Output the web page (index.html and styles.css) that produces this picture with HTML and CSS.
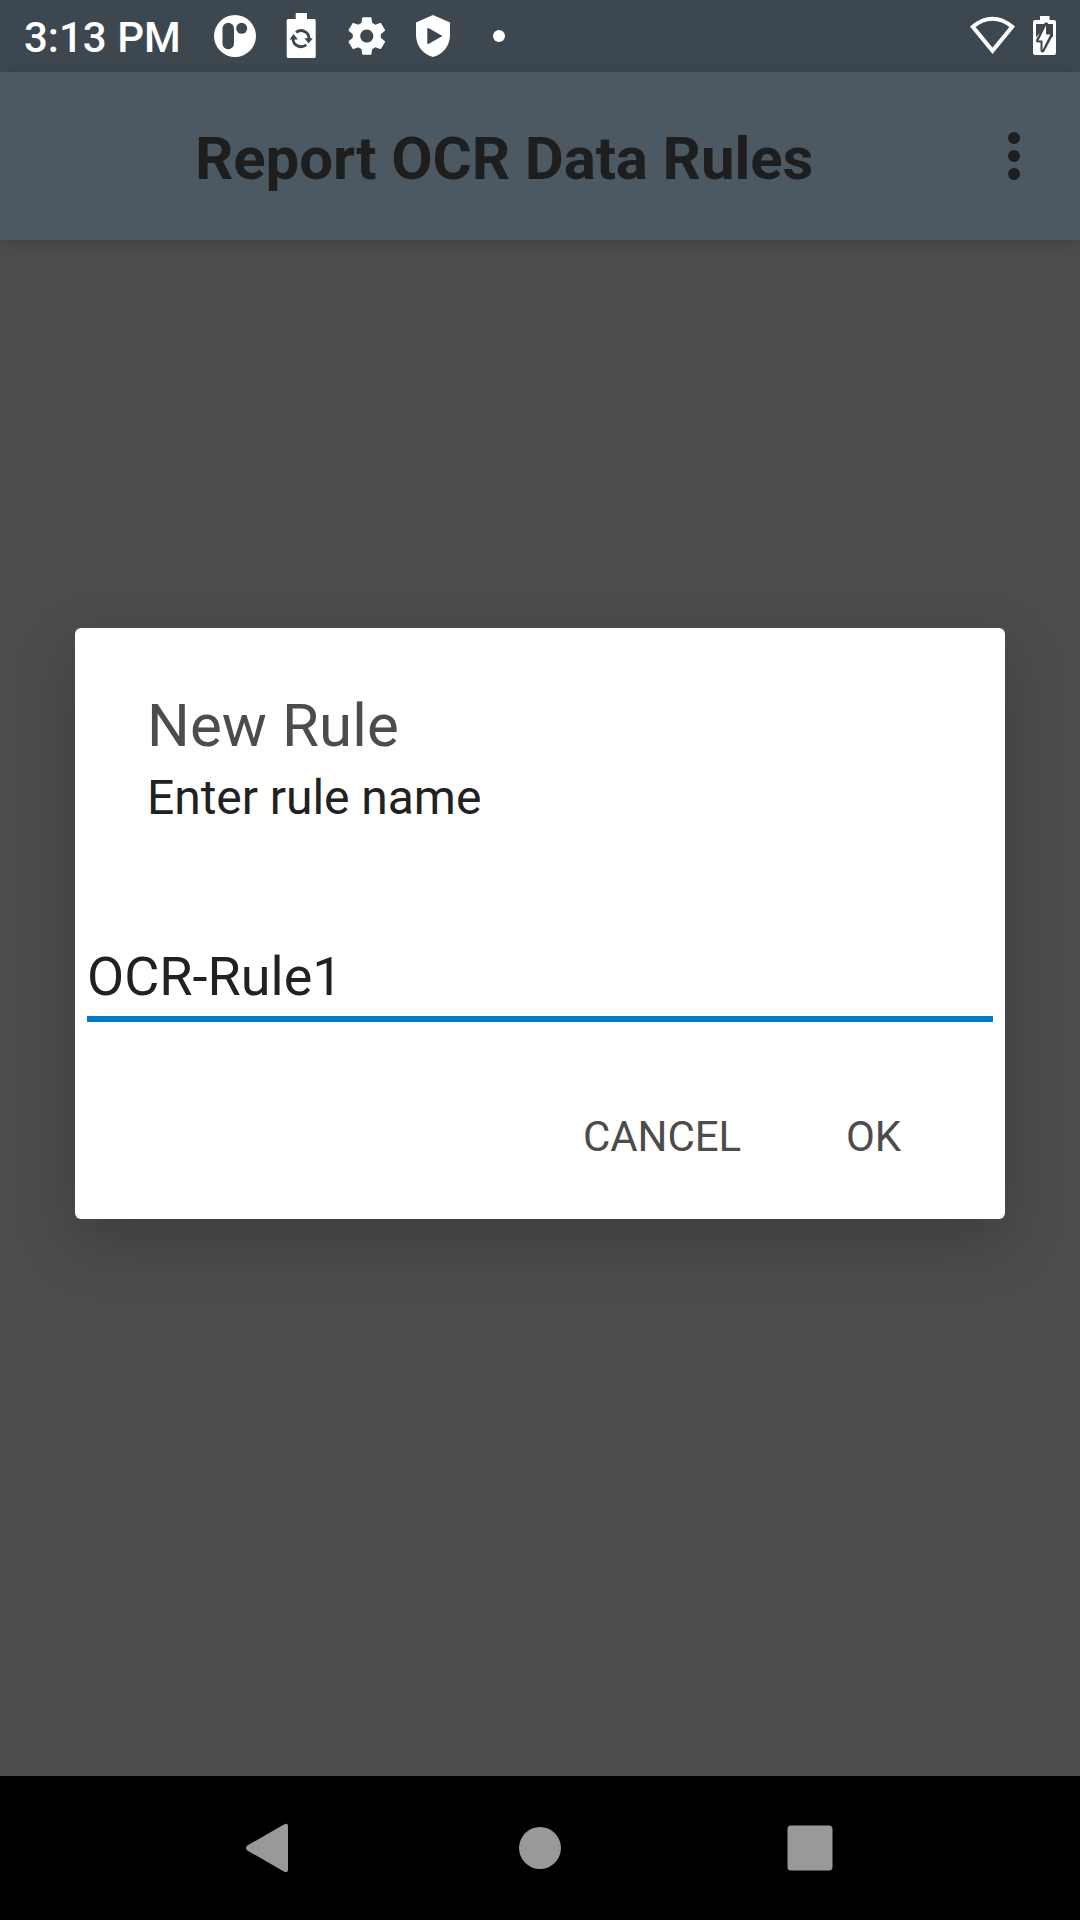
FILE: index.html
```html
<!DOCTYPE html>
<html lang="en">
<head>
<meta charset="utf-8">
<title>Report OCR Data Rules</title>
<link rel="stylesheet" href="styles.css">
</head>
<body>
<div class="screen">
  <header class="status-bar">
    <span class="clock">3:13 PM</span>
    <div class="notifications">
      <svg class="slot" viewBox="0 0 66 72"><circle cx="33" cy="36" r="21" fill="#fff"/><rect class="cut" x="20.500" y="22.700" width="11.500" height="26.500" rx="5.750"/><circle class="cut" cx="39.700" cy="28.300" r="5.500"/></svg>
      <svg class="slot" viewBox="0 0 66 72"><path fill="#fff" d="M27.700 13H39v6h7.200q1.500 0 1.500 1.500v36q0 1.500-1.500 1.500H20.200q-1.500 0-1.500-1.500v-36q0-1.500 1.500-1.500h7.500z"/><g class="cut-line"><path d="M28 32.400a8 8 0 0 1 13 6.600"/><path d="M38.200 44.700A8 8 0 0 1 25 38.500"/></g><path class="cut" d="M36.500 38.200h8.300l-4.200 5.200zM21.500 39.500h8.400l-4.300-5.400z"/></svg>
      <svg class="slot" viewBox="0 0 66 72"><path transform="translate(10.300 13.500) scale(1.875)" fill="#fff" d="M19.430 12.980c.04-.32.07-.64.07-.98s-.03-.66-.07-.98l2.110-1.650c.19-.15.24-.42.12-.64l-2-3.460c-.12-.22-.39-.3-.61-.22l-2.490 1c-.52-.4-1.080-.73-1.690-.98l-.38-2.650C14.460 2.180 14.250 2 14 2h-4c-.25 0-.46.18-.49.42l-.38 2.650c-.61.25-1.170.59-1.690.98l-2.490-1c-.23-.09-.49 0-.61.22l-2 3.460c-.13.22-.07.49.12.64l2.110 1.650c-.04.32-.07.65-.07.98s.03.66.07.98l-2.110 1.650c-.19.15-.24.42-.12.64l2 3.460c.12.22.39.3.61.22l2.490-1c.52.4 1.080.73 1.690.98l.38 2.650c.03.24.24.42.49.42h4c.25 0 .46-.18.49-.42l.38-2.650c.61-.25 1.170-.59 1.690-.98l2.490 1c.23.09.49 0 .61-.22l2-3.460c.12-.22.07-.49-.12-.64l-2.110-1.650zM12 15.500c-1.930 0-3.500-1.570-3.500-3.500s1.570-3.500 3.500-3.500 3.500 1.570 3.500 3.500-1.570 3.500-3.500 3.500z"/></svg>
      <svg class="slot" viewBox="0 0 66 72"><path fill="#fff" d="M33 15l17 7.500v12.500c0 10.500-7 19.500-17 22-10-2.500-17-11.500-17-22V22.500z"/><path class="cut" d="M27.300 29.200q0-1.700 1.500-.9L42.500 36 28.800 43.800q-1.500.8-1.500-.9z"/></svg>
      <svg class="slot" viewBox="0 0 66 72"><circle cx="33" cy="36" r="6" fill="#fff"/></svg>
    </div>
    <div class="system">
      <svg class="wifi" viewBox="0 0 46 72"><path fill="none" stroke="#fff" stroke-width="4" d="M2.800 26.700Q22.500 10.800 42.200 26.700L22.500 50.800z"/></svg>
      <svg class="battery" viewBox="0 0 24 72"><path fill="#fff" d="M7 16h9.500v4H21q2 0 2 2v31q0 2-2 2H2q-2 0-2-2V22q0-2 2-2h5z"/><path class="cut" d="M3 24h8l1.500-1.700 2.500.7v1h5v13H3z"/><path fill="#fff" d="M3 37.500l3.500-4.500v5H3z"/><path class="bolt-edge" d="M13 25.500V34.500h5L9.500 50.500V40.500H5z"/><path fill="#fff" d="M13 25.500V34.500h4.300L9.500 50V40.500H5.500z"/></svg>
    </div>
  </header>
  <div class="app-bar">
    <h1 class="title">Report OCR Data Rules</h1>
    <svg class="more" viewBox="0 0 12 48"><circle cx="6" cy="6" r="6"/><circle cx="6" cy="24" r="6"/><circle cx="6" cy="42" r="6"/></svg>
  </div>
  <main class="content">
    <section class="dialog">
      <h2 class="dialog-title">New Rule</h2>
      <p class="message">Enter rule name</p>
      <div class="field">OCR-Rule1</div>
      <div class="actions"><span>CANCEL</span><span>OK</span></div>
    </section>
  </main>
  <nav class="nav-bar">
    <svg viewBox="0 0 60 60"><path d="M7.300 27.500L43.500 6.700Q48 4.500 48 8v44q0 3.500-4.500 1.300L7.300 32.500Q4.700 30 7.300 27.500z"/></svg>
    <svg viewBox="0 0 60 60"><circle cx="30" cy="30" r="21"/></svg>
    <svg viewBox="0 0 60 60"><rect x="7.500" y="7.500" width="45" height="45" rx="3.500"/></svg>
  </nav>
</div>
</body>
</html>
```

FILE: styles.css
```css
* { box-sizing: border-box; }
body { margin: 0; }
.screen {
  width: 1080px;
  height: 1920px;
  display: flex;
  flex-direction: column;
  overflow: hidden;
  background: #4c4c4c;
  font-family: Roboto, sans-serif;
  color: #212121;
}
svg { display: block; flex: none; }
.status-bar {
  height: 72px;
  display: flex;
  background: #3d474f;
  color: #fff;
}
.clock {
  width: 202px;
  padding: 2px 0 0 24px;
  font-size: 42px;
  font-weight: 500;
  line-height: 72px;
  white-space: nowrap;
}
.notifications { display: flex; }
.slot { width: 66px; height: 72px; }
.cut { fill: #3d474f; }
.cut-line { fill: none; stroke: #3d474f; stroke-width: 2.8; }
.bolt-edge { fill: #3d474f; stroke: #3d474f; stroke-width: 4; stroke-linejoin: round; }
.system { display: flex; gap: 17px; margin-left: auto; padding-right: 23px; }
.wifi { width: 46px; height: 72px; }
.battery { width: 24px; height: 72px; }
.app-bar {
  height: 168px;
  display: flex;
  align-items: center;
  justify-content: space-between;
  padding: 0 60px 0 195px;
  background: #4c5963;
  box-shadow: 0 3px 12px rgba(0, 0, 0, .14);
}
.title {
  margin: 5px 0 0;
  font-size: 60px;
  font-weight: 700;
  line-height: 70px;
  letter-spacing: -.12px;
  color: #1e1e1e;
  white-space: nowrap;
}
.more { width: 12px; height: 48px; fill: #1e1e1e; }
.content { flex: 1; padding: 388px 75px 0; }
.dialog {
  height: 591px;
  padding: 63px 12px 0;
  border-radius: 6px;
  background: #fff;
  box-shadow: 0 22px 60px rgba(0, 0, 0, .2);
}
.dialog-title {
  margin: 0 60px;
  font-size: 60px;
  font-weight: 400;
  line-height: 70px;
  letter-spacing: .1px;
  color: #4c4c4c;
}
.message {
  margin: 9px 60px 0;
  font-size: 48px;
  line-height: 56px;
  letter-spacing: -.05px;
}
.field {
  height: 77px;
  margin-top: 119px;
  border-bottom: 6px solid #007bc0;
  font-size: 54px;
  line-height: 64px;
}
.actions {
  display: flex;
  justify-content: flex-end;
  gap: 105px;
  margin-top: 90px;
  padding-right: 92px;
  font-size: 42px;
  line-height: 50px;
  letter-spacing: -.1px;
  color: #4c4c4c;
}
.nav-bar {
  height: 144px;
  display: flex;
  justify-content: space-between;
  align-items: center;
  padding: 0 240px;
  background: #000;
}
.nav-bar svg { width: 60px; height: 60px; fill: #999; }
```
